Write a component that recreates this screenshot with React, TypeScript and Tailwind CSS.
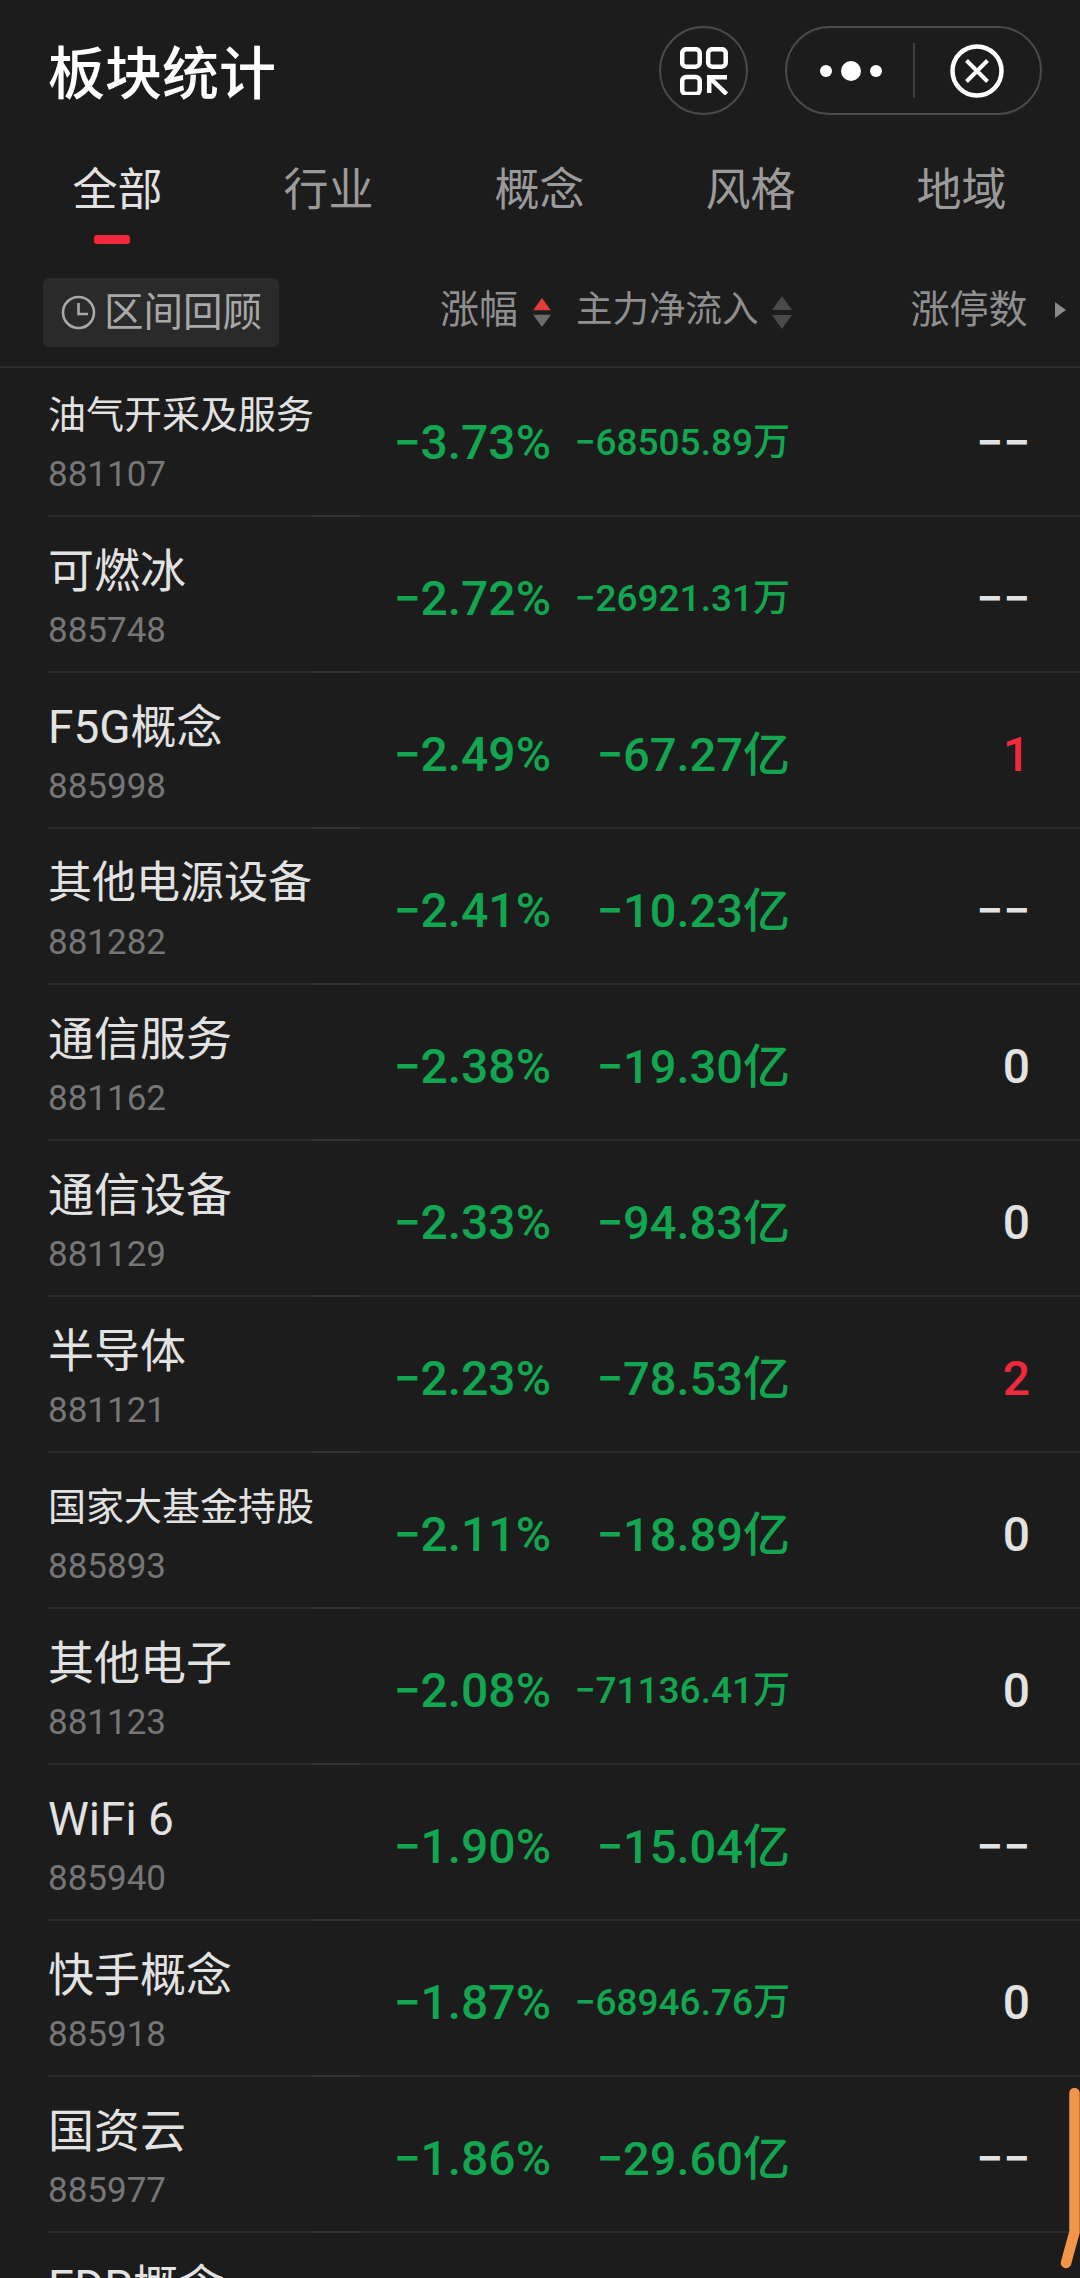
const rows: { name: string; size: string; code: string; pct: string; flow: string; small?: boolean; limit: string; red?: boolean }[] = [
  { name: "油气开采及服务", size: "text-[38px]", code: "881107", pct: "−3.73%", flow: "−68505.89万", small: true, limit: "−−" },
  { name: "可燃冰", size: "text-[46px]", code: "885748", pct: "−2.72%", flow: "−26921.31万", small: true, limit: "−−" },
  { name: "F5G概念", size: "text-[46px]", code: "885998", pct: "−2.49%", flow: "−67.27亿", limit: "1", red: true },
  { name: "其他电源设备", size: "text-[44px]", code: "881282", pct: "−2.41%", flow: "−10.23亿", limit: "−−" },
  { name: "通信服务", size: "text-[46px]", code: "881162", pct: "−2.38%", flow: "−19.30亿", limit: "0" },
  { name: "通信设备", size: "text-[46px]", code: "881129", pct: "−2.33%", flow: "−94.83亿", limit: "0" },
  { name: "半导体", size: "text-[46px]", code: "881121", pct: "−2.23%", flow: "−78.53亿", limit: "2", red: true },
  { name: "国家大基金持股", size: "text-[38px]", code: "885893", pct: "−2.11%", flow: "−18.89亿", limit: "0" },
  { name: "其他电子", size: "text-[46px]", code: "881123", pct: "−2.08%", flow: "−71136.41万", small: true, limit: "0" },
  { name: "WiFi 6", size: "text-[46px]", code: "885940", pct: "−1.90%", flow: "−15.04亿", limit: "−−" },
  { name: "快手概念", size: "text-[46px]", code: "885918", pct: "−1.87%", flow: "−68946.76万", small: true, limit: "0" },
  { name: "国资云", size: "text-[46px]", code: "885977", pct: "−1.86%", flow: "−29.60亿", limit: "−−" },
];

const tabs = ["全部", "行业", "概念", "风格", "地域"];

function SortArrows({ up, down, width, height }: { up: string; down: string; width: number; height: number }) {
  return (
    <svg width={width} height={height} viewBox="0 0 20 34" className="shrink-0">
      <polygon points="10,0 20,14 0,14" fill={up} />
      <polygon points="0,19 20,19 10,33" fill={down} />
    </svg>
  );
}

function Row({ r }: { r: (typeof rows)[number] }) {
  return (
    <div className="relative ml-[48px] h-[156px] flex border-b-2 border-[#2a2a2a]">
      <div className="w-[320px] shrink-0 flex flex-col pt-[28px]">
        <div className={`${r.size} h-[52px] leading-[52px] text-[#e2e2e2] whitespace-nowrap`}>{r.name}</div>
        <div className="mt-[14px] h-[40px] leading-[40px] text-[35px] text-[#767676]">{r.code}</div>
      </div>
      <div className="w-[183px] shrink-0 pt-[10px] flex items-center justify-end text-[48px] font-medium text-[#12a650] whitespace-nowrap">{r.pct}</div>
      <div className={`w-[239px] shrink-0 pt-[10px] flex items-center justify-end ${r.small ? "text-[37px]" : "text-[47px]"} text-[#12a650] font-medium whitespace-nowrap`}>{r.flow}</div>
      <div className={`w-[240px] shrink-0 pt-[10px] flex items-center justify-end text-[48px] font-medium ${r.red ? "text-[#f0293f]" : "text-[#e2e2e2]"}`}>{r.limit}</div>
      <div className="absolute left-[264px] bottom-[-2px] w-[48px] h-[2px] bg-[#353535]" />
    </div>
  );
}

export default function App() {
  return (
    <div className="relative w-[1080px] h-[2278px] overflow-hidden bg-[#1c1c1c] flex flex-col font-['Roboto','Noto_Sans_CJK_SC',sans-serif]">
      <header className="shrink-0 h-[163px] pt-[26px] pl-[48px] pr-[38px] flex items-start justify-between">
        <div className="h-[89px] pt-[4px] leading-[89px] text-[57px] font-medium text-white whitespace-nowrap">板块统计</div>
        <div className="flex items-center gap-[37px]">
          <div className="w-[89px] h-[89px] rounded-full border-2 border-[#4a4a4a] flex items-center justify-center">
            <svg width="48" height="48" viewBox="0 0 48 48" fill="none" stroke="#fff" strokeWidth="4.5">
              <rect x="2.2" y="2.2" width="17.5" height="17.5" rx="4" />
              <rect x="28.2" y="2.2" width="17.5" height="17.5" rx="4" />
              <rect x="2.2" y="30" width="17.5" height="17" rx="4" />
              <path d="M27 30.2H47M29.2 28V46M31 32L46.5 47" />
            </svg>
          </div>
          <div className="w-[257px] h-[89px] rounded-full border-2 border-[#4a4a4a] flex items-center">
            <div className="w-[126px] shrink-0 flex items-center justify-center gap-[9px] pl-[2px]">
              <span className="w-[12px] h-[12px] rounded-full bg-white" />
              <span className="w-[20px] h-[20px] rounded-full bg-white" />
              <span className="w-[12px] h-[12px] rounded-full bg-white" />
            </div>
            <div className="w-[2px] h-[55px] bg-[#3f3f3f]" />
            <div className="flex-1 flex items-center justify-center pr-[2px]">
              <svg width="54" height="54" viewBox="0 0 54 54" fill="none" stroke="#fff">
                <circle cx="27" cy="27" r="24.5" strokeWidth="4.5" />
                <path d="M16.5 16.5L37.5 37.5M37.5 16.5L16.5 37.5" strokeWidth="4" />
              </svg>
            </div>
          </div>
        </div>
      </header>

      <nav className="shrink-0 h-[83px] pl-[12px] flex">
        {tabs.map((t, i) => (
          <div key={t} className="w-[211px] flex flex-col items-center">
            <div className={`h-[56px] leading-[56px] text-[45px] ${i === 0 ? "text-[#e2e2e2]" : "text-[#9a9a9a]"}`}>{t}</div>
            {i === 0 && <div className="mt-[16px] mr-[12px] w-[36px] h-[9px] rounded-[3px] bg-[#f0293f]" />}
          </div>
        ))}
      </nav>

      <div className="shrink-0 h-[122px] border-b-2 border-[#2a2a2a] pt-[32px] flex items-start">
        <div className="ml-[43px] w-[236px] h-[69px] rounded-[6px] bg-[#2a2a2a] flex items-center pl-[18px] gap-[8px] text-[39.5px] text-[#a8a8a8] shrink-0">
          <svg width="35" height="35" viewBox="0 0 35 35" fill="none" stroke="#a8a8a8" strokeWidth="2.6" className="shrink-0">
            <circle cx="17.5" cy="17.5" r="15.5" />
            <path d="M17.5 8V19H27" />
          </svg>
          <span className="whitespace-nowrap">区间回顾</span>
        </div>
        <div className="h-[64px] flex items-center text-[#8f8f8f] whitespace-nowrap">
          <span className="ml-[161px] text-[39px]">涨幅</span>
          <span className="ml-[15px] mt-[5px]"><SortArrows up="#e63b3b" down="#6b6b6b" width={18} height={30} /></span>
          <span className="ml-[25px] text-[36.5px]">主力净流入</span>
          <span className="ml-[13px] mt-[5px]"><SortArrows up="#4a4a4a" down="#4a4a4a" width={20} height={34} /></span>
          <span className="ml-[119px] text-[39px]">涨停数</span>
          <svg width="11" height="16" viewBox="0 0 11 16" className="ml-[27px] shrink-0"><polygon points="0,0 11,8 0,16" fill="#8a8a8a" /></svg>
        </div>
      </div>

      <div className="flex-1 overflow-hidden">
        <div className="-mt-[7px]">
          {rows.map((r) => (
            <Row key={r.code} r={r} />
          ))}
          <div className="ml-[48px] pt-[28px] h-[52px] leading-[52px] text-[46px] text-[#e2e2e2]">
            <div className="h-[52px] leading-[52px]">EDR概念</div>
          </div>
        </div>
      </div>

      <svg width="24" height="190" viewBox="0 0 24 190" className="absolute left-[1056px] top-[2084px]" fill="none" stroke="#f2954a" strokeLinecap="round" strokeLinejoin="round">
        <path d="M18.5 9V148L10 179" strokeWidth="10.5" />
      </svg>
    </div>
  );
}
